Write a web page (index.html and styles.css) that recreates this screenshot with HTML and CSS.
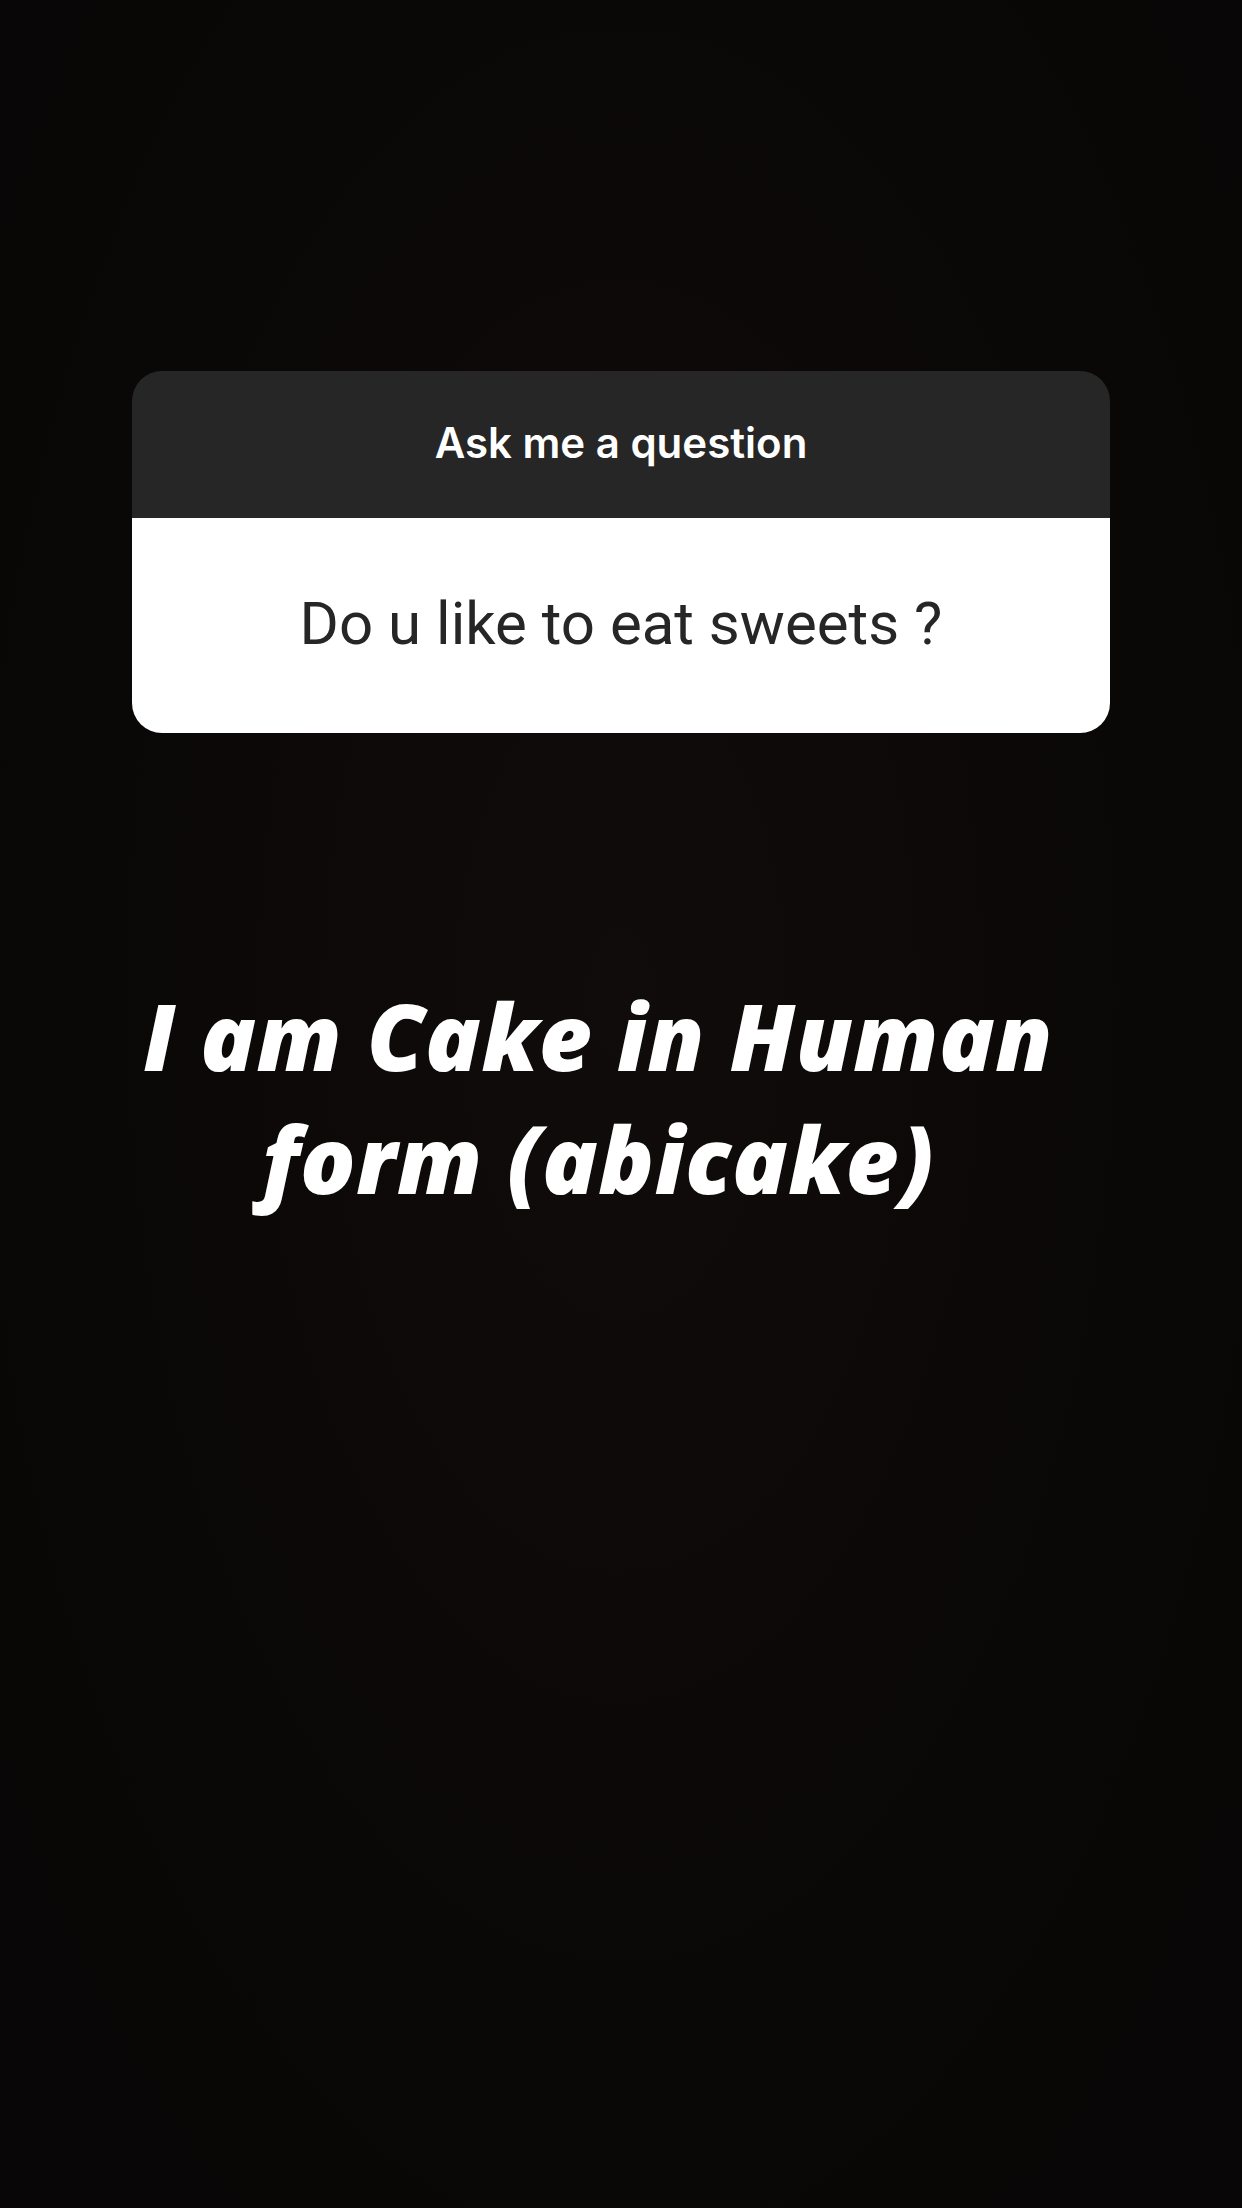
FILE: index.html
```html
<!DOCTYPE html>
<html lang="en">
<head>
  <meta charset="UTF-8">
  <meta name="viewport" content="width=device-width, initial-scale=1.0">
  <title>Ask me a question</title>
  <link rel="stylesheet" href="styles.css">
</head>
<body>

  <div class="story">
    <!-- Question sticker -->
    <div class="question-card">
      <div class="question-head">Ask me a question</div>
      <div class="question-body">Do u like to eat sweets ?</div>
    </div>

    <!-- Answer text -->
    <div class="answer">I am Cake in Human<br>form (abicake)</div>
  </div>

</body>
</html>
```

FILE: styles.css
```css
/* General Styles */
body, html {
  margin: 0;
  padding: 0;
  background: #0a0707;
  height: 100%;
  overflow: hidden;
}

.story {
  width: 1242px;
  height: 2208px;
  padding-top: 371px;
  box-sizing: border-box;
  background: radial-gradient(ellipse at 50% 45%, #100c0b 0%, #0a0707 60%, #080606 100%);
}

/* Question sticker */
.question-card {
  width: 978px;
  margin: 0 0 0 132px;
  border-radius: 30px;
  overflow: hidden;
  font-family: Roboto, "Noto Sans", sans-serif;
}

.question-head {
  background: #262626;
  color: #fff;
  height: 147px;
  display: flex;
  align-items: center;
  justify-content: center;
  font-family: Inter, Roboto, sans-serif;
  font-size: 42px;
  font-weight: 600;
  padding-bottom: 4px;
  box-sizing: border-box;
}

.question-body {
  background: #fff;
  color: #262626;
  height: 215px;
  display: flex;
  align-items: center;
  justify-content: center;
  font-size: 60px;
  font-weight: 400;
  padding-bottom: 4px;
  box-sizing: border-box;
}

/* Answer text */
.answer {
  margin-top: 241px;
  padding-right: 46px;
  text-align: center;
  color: #fff;
  font-family: "Open Sans", Lato, sans-serif;
  font-weight: 800;
  font-style: italic;
  font-size: 92px;
  letter-spacing: 0.5px;
  line-height: 123px;
}
```
